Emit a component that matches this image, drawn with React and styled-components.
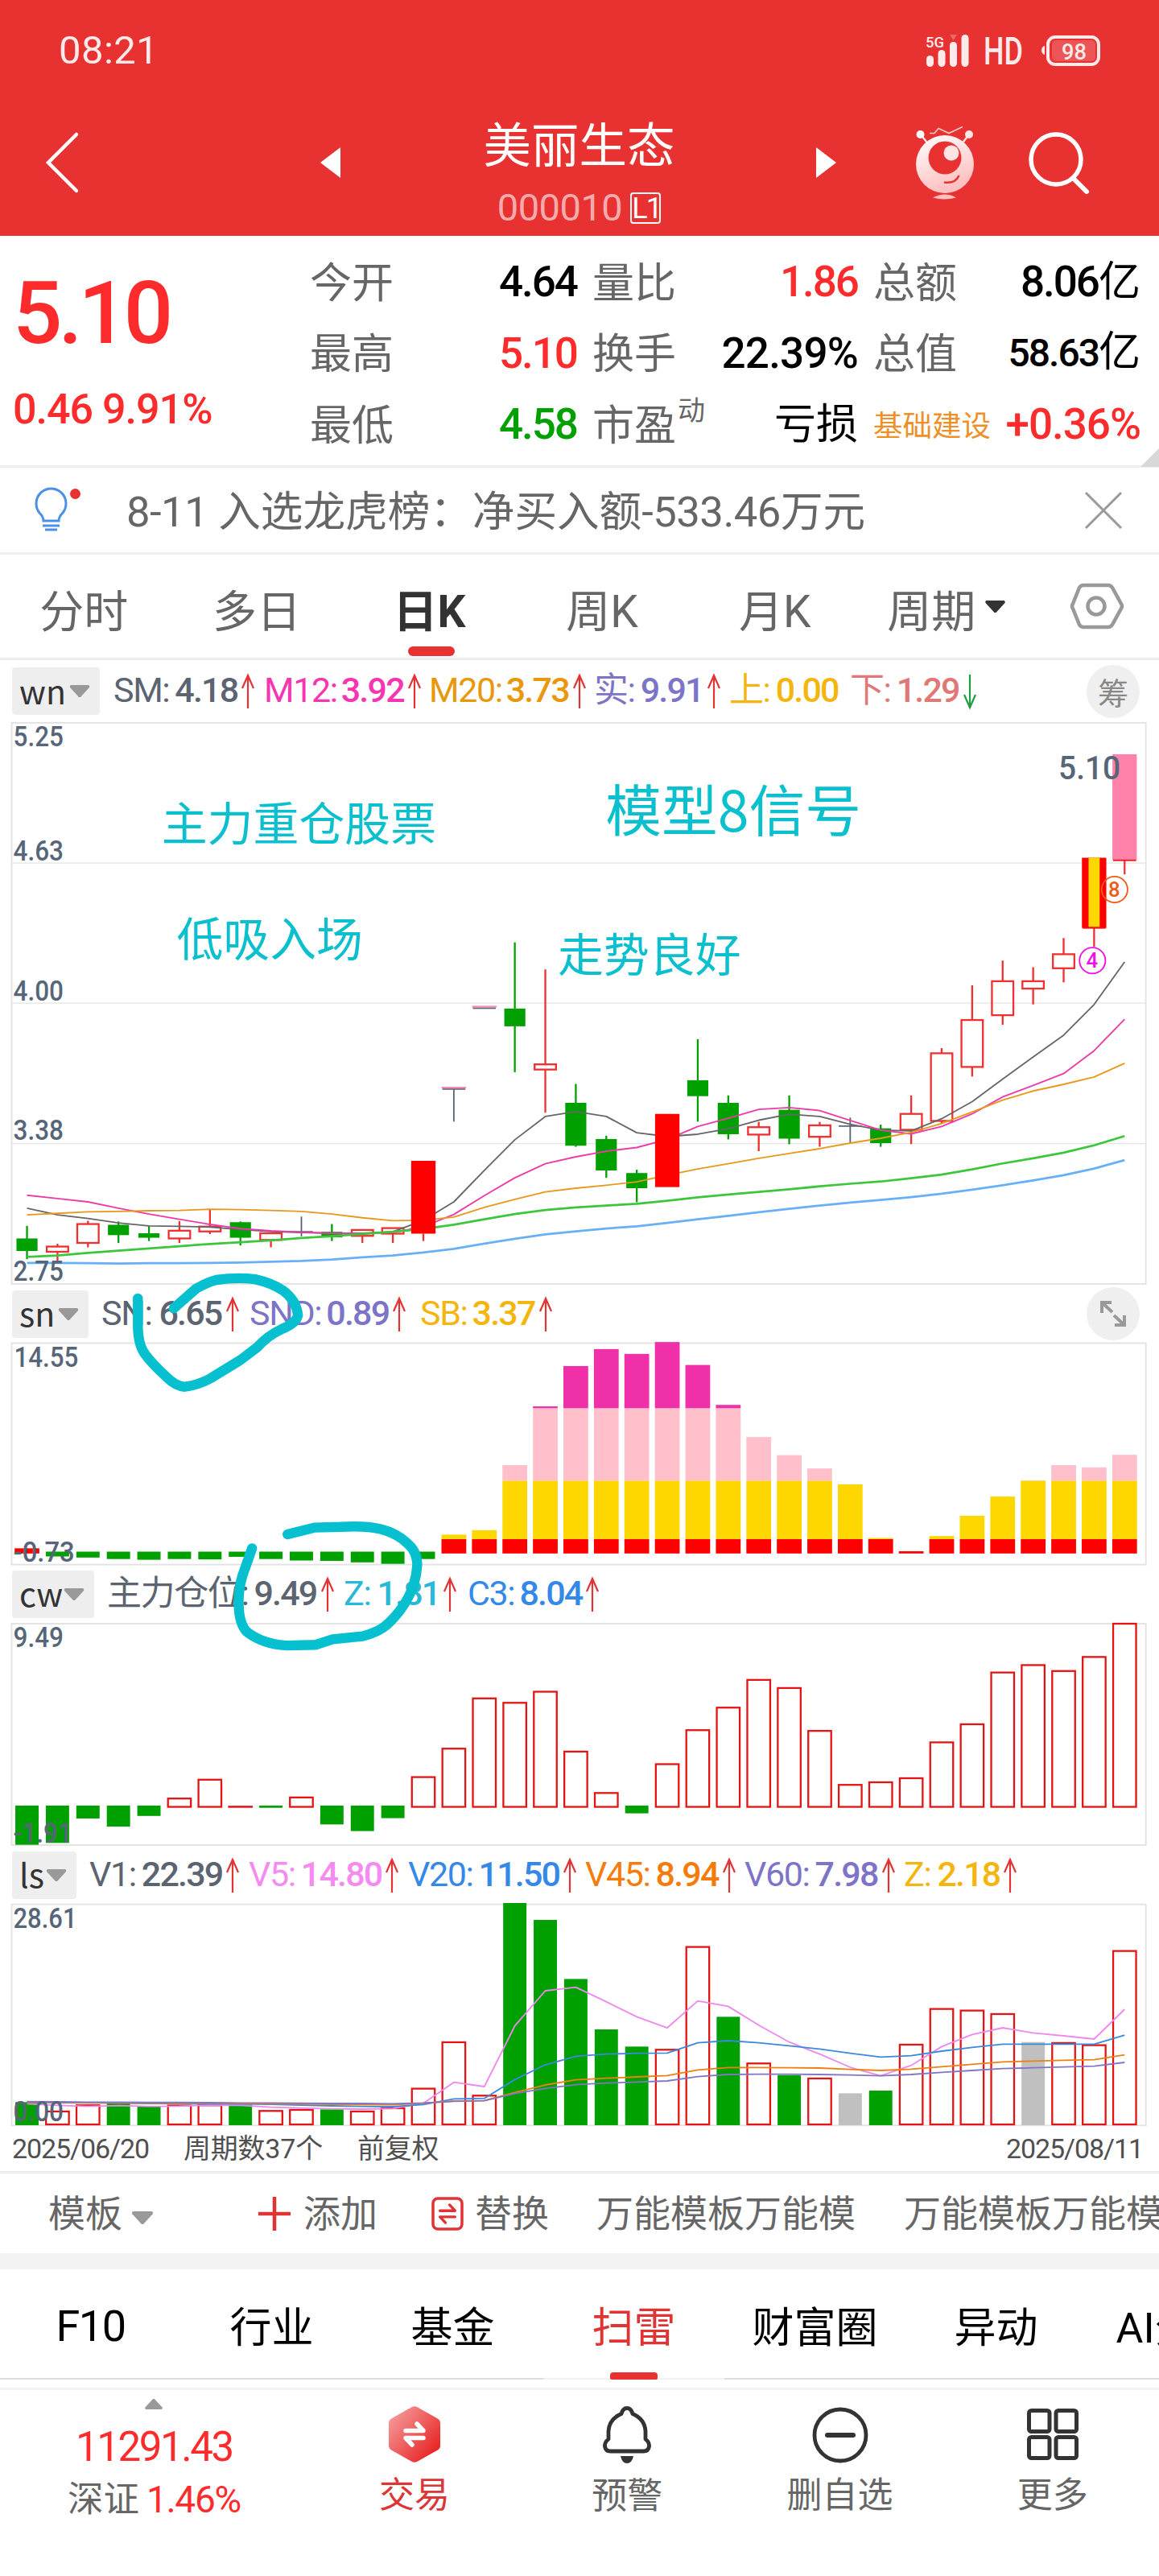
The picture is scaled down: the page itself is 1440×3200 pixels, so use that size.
import React from 'react';
import styled, { createGlobalStyle, css } from 'styled-components';

const RED = '#e83131';
const UP = '#fd2b2b';
const DOWN = '#00a000';
const SLATE = '#566678';
const INK = '#0abfce';

const GlobalStyle = createGlobalStyle`
  * { box-sizing: border-box; }
  body {
    margin: 0;
    background: #fff;
    font-family: Roboto, 'Noto Sans CJK SC', sans-serif;
    font-size: 52px;
    color: #666;
  }
  svg { display: block; flex: none; overflow: visible; }
`;

const Screen = styled.div`
  width: 1440px;
  height: 3200px;
  overflow: hidden;
  display: flex;
  flex-direction: column;
  background: #fff;
  white-space: nowrap;
`;

/* ---------- header ---------- */

const Header = styled.header`
  height: 293px;
  flex: none;
  background: ${RED};
  color: #fff;
`;

const StatusBar = styled.div`
  height: 125px;
  padding: 0 73px 0 73px;
  display: flex;
  align-items: center;
  justify-content: space-between;
`;

const Clock = styled.span`
  font-size: 49px;
  letter-spacing: 0.4px;
  line-height: 60px;
  opacity: 0.9;
`;

const TitleBar = styled.div`
  height: 167px;
  padding-left: 57px;
  display: flex;
`;

const Spot = styled.div`
  width: ${p => p.$w}px;
  padding-top: ${p => p.$top}px;
  flex: none;
`;

const StockTitle = styled.div`
  width: 589px;
  flex: none;
  display: flex;
  flex-direction: column;
  align-items: center;
`;

const StockName = styled.div`
  margin-top: 17px;
  font-size: 59.5px;
  line-height: 80px;
`;

const StockCode = styled.div`
  margin-top: 11px;
  display: flex;
  align-items: center;
  gap: 10px;
  font-size: 47px;
  line-height: 50px;
  letter-spacing: -0.5px;
  color: rgba(255, 255, 255, 0.62);
`;

const Level = styled.span`
  width: 38px;
  height: 39px;
  border: 2px solid #fff;
  border-radius: 4px;
  color: #fff;
  font-size: 36px;
  line-height: 36px;
  letter-spacing: -2px;
  text-align: center;
`;

/* ---------- quote ---------- */

const Quote = styled.section`
  position: relative;
  height: 288px;
  flex: none;
  display: flex;
  padding-top: 13px;
  border-bottom: 3px solid #eee;
  &::after {
    content: '';
    position: absolute;
    right: 0;
    bottom: -2px;
    border-left: 23px solid transparent;
    border-bottom: 23px solid #d8d8d8;
  }
`;

const Last = styled.div`
  width: 385px;
  padding: 43px 0 0 16px;
  color: ${UP};
`;

const Price = styled.div`
  font-size: 108px;
  font-weight: 500;
  line-height: 80px;
  letter-spacing: -5px;
`;

const Change = styled.div`
  margin-top: 50px;
  font-size: 52px;
  font-weight: 500;
  line-height: 60px;
  letter-spacing: -1px;
`;

const QuoteGrid = styled.div`
  display: grid;
  grid-template-columns: 332px 330px 332px;
  grid-auto-rows: 88.5px;
  column-gap: 19px;
`;

const Cell = styled.div`
  display: flex;
  justify-content: space-between;
  align-items: center;
  line-height: 60px;
`;

const CellLabel = styled.span`
  display: flex;
  padding-top: 5px;
  color: ${p => p.$color || '#666'};
  font-size: ${p => p.$size || 52}px;
  sup {
    font-size: 34px;
    line-height: 20px;
    margin-left: 2px;
  }
`;

const CellValue = styled.span`
  font-size: ${p => p.$size || 53}px;
  font-weight: 500;
  letter-spacing: ${p => p.$ls || -2}px;
  color: ${p => p.$color || '#000'};
  i {
    font-style: normal;
    font-weight: 400;
    font-size: 52px;
    letter-spacing: 0;
  }
`;

/* ---------- notice ---------- */

const Notice = styled.section`
  height: 108px;
  flex: none;
  display: flex;
  align-items: center;
  padding: 0 45px 0 42px;
  border-bottom: 3px solid #eee;
`;

const NoticeText = styled.div`
  flex: 1;
  margin-left: 57px;
  padding-top: 4px;
  font-size: 52.6px;
  line-height: 60px;
  b {
    font-weight: 400;
    letter-spacing: -0.5px;
  }
`;

/* ---------- period tabs ---------- */

const Periods = styled.nav`
  height: 131px;
  flex: none;
  display: flex;
  align-items: center;
  border-bottom: 3px solid #eee;
`;

const Period = styled.div`
  position: relative;
  width: 214.6px;
  height: 100%;
  display: flex;
  align-items: center;
  justify-content: center;
  gap: 9px;
  padding: 4px 6px 0 0;
  font-size: 55px;
  svg { margin-top: -4px; }
  ${p => p.$active && css`
    color: #333;
    font-weight: 700;
    &::after {
      content: '';
      position: absolute;
      left: 78px;
      bottom: 2px;
      width: 58px;
      height: 12px;
      border-radius: 6px;
      background: ${RED};
    }
  `}
`;

/* ---------- charts ---------- */

const Charts = styled.section`
  position: relative;
  flex: none;
`;

const MetricRow = styled.div`
  height: ${p => p.$h || 70}px;
  display: flex;
  align-items: center;
  padding: 0 24px 0 15px;
`;

const Badge = styled.div`
  width: ${p => p.$w}px;
  height: 59px;
  margin-right: ${p => p.$gap}px;
  padding: 0 12px 4px 9px;
  display: flex;
  align-items: center;
  justify-content: space-between;
  border-radius: 4px;
  background: #eee;
  color: #333;
  font-family: 'Noto Sans CJK SC', sans-serif;
  font-size: 41px;
  line-height: 50px;
  svg { margin-top: 4px; }
`;

const Metric = styled.div`
  width: ${p => p.$w}px;
  display: flex;
  align-items: center;
  padding-bottom: 3px;
  font-size: 43px;
  line-height: 50px;
  letter-spacing: -1.4px;
  color: ${p => p.$color};
  b {
    margin-left: ${p => p.$gap}px;
    font-weight: 500;
    letter-spacing: -1.8px;
  }
  svg { margin: 4px 0 0 5px; }
`;

const Round = styled.div`
  width: 66px;
  height: 66px;
  margin-left: auto;
  border-radius: 50%;
  background: #efefef;
  display: flex;
  align-items: center;
  justify-content: center;
  color: #888;
  font-size: 38px;
`;

const Scribble = styled.svg`
  position: absolute;
  left: 0;
  top: 770px;
  pointer-events: none;
`;

const Dates = styled.div`
  height: 55px;
  flex: none;
  display: flex;
  align-items: center;
  padding: 0 20px 2px 15px;
  font-size: 34px;
  line-height: 40px;
  letter-spacing: -0.2px;
  color: #505050;
  span { margin-right: 43px; }
  span:first-child { letter-spacing: -1.1px; }
  span:last-child { margin: 0 0 0 auto; letter-spacing: -1.1px; }
`;

/* ---------- template bar ---------- */

const Templates = styled.div`
  height: 122px;
  flex: none;
  display: flex;
  align-items: center;
  border-top: 3px solid #eee;
  border-bottom: 20px solid #f3f3f3;
  padding-left: 60px;
  font-size: 46px;
  line-height: 60px;
`;

const TemplateItem = styled.div`
  display: flex;
  align-items: center;
  gap: ${p => p.$gap || 0}px;
  margin-right: ${p => p.$mr}px;
  svg { margin-top: ${p => p.$drop || 0}px; }
`;

const Divider = styled.i`
  width: 2px;
  height: 52px;
  margin-right: 66px;
  background: #eee;
`;

/* ---------- info tabs ---------- */

const InfoTabs = styled.nav`
  height: 150px;
  flex: none;
  display: flex;
  border-bottom: 3px solid #f3f3f3;
`;

const InfoTab = styled.div`
  position: relative;
  flex: none;
  width: 225px;
  height: 137px;
  display: flex;
  align-items: center;
  justify-content: center;
  padding-top: 1px;
  font-size: 52px;
  color: ${p => (p.$active ? '#e03434' : '#000')};
  border-bottom: 2px solid ${p => (p.$active ? '#f2f2f2' : '#ddd')};
  ${p => p.$active && css`
    &::after {
      content: '';
      position: absolute;
      left: 83px;
      bottom: -2px;
      width: 59px;
      height: 9px;
      border-radius: 4px 4px 2px 2px;
      background: ${RED};
    }
  `}
  big {
    padding-top: 5px;
    font-size: 54px;
    letter-spacing: -1.5px;
  }
`;

/* ---------- bottom nav ---------- */

const BottomNav = styled.footer`
  flex: 1;
  display: flex;
`;

const NavItem = styled.div`
  width: 264.4px;
  display: flex;
  flex-direction: column;
  align-items: center;
  padding-top: 20px;
  font-size: 44px;
  line-height: 60px;
  color: ${p => (p.$hot ? '#dc3636' : '#666')};
  span { margin-top: 11px; }
`;

const IndexItem = styled.div`
  width: 383px;
  display: flex;
  flex-direction: column;
  align-items: center;
  padding-top: 10px;
  color: ${UP};
`;

const IndexValue = styled.div`
  margin-top: 16px;
  font-size: 51px;
  line-height: 60px;
  letter-spacing: -2.4px;
`;

const IndexChange = styled.div`
  margin-top: 5px;
  display: flex;
  gap: 9px;
  font-size: 46px;
  line-height: 60px;
  letter-spacing: -1.3px;
  em {
    font-style: normal;
    font-size: 44.5px;
    letter-spacing: 0;
    color: #666;
  }
`;

/* ---------- icons ---------- */

const Caret = ({ w = 26, h = 17, color = '#999', up }) => (
  <svg width={w} height={h} viewBox="0 0 26 17">
    <path
      d={up ? 'M2 16h22q2-1 1-3L14 1h-2L1 13q-1 2 1 3z' : 'M2 1h22q2 1 1 3L14 16h-2L1 4Q0 2 2 1z'}
      fill={color}
    />
  </svg>
);

const Arrow = ({ down }) => (
  <svg width="16" height="42" viewBox="0 0 16 42">
    <path
      d={down ? 'M8 0v41M1 25l7 16 7-16' : 'M8 42V1M1 17L8 1l7 16'}
      fill="none"
      stroke={down ? '#1f9d43' : '#e23434'}
      strokeWidth="2.2"
    />
  </svg>
);

const StatusIcons = () => (
  <svg width="216" height="40" viewBox="0 0 216 40" opacity="0.9" fill="#fff">
    <text x="-1" y="15.5" fontSize="19" fontWeight="500" textLength="23" lengthAdjust="spacingAndGlyphs">5G</text>
    <rect x="0" y="26" width="9" height="14" rx="4.5" />
    <rect x="14.5" y="19" width="9" height="21" rx="4.5" />
    <rect x="29" y="9" width="9" height="31" rx="4.5" />
    <rect x="43.5" y="0" width="9" height="40" rx="4.5" />
    <path d="M29 0h9l-4.500 7z" opacity="0.3" />
    <text x="71" y="37" fontSize="49" fontWeight="500" textLength="49" lengthAdjust="spacingAndGlyphs">HD</text>
    <path d="M147 14v11q-4-1-4-5.500t4-5.500z" />
    <rect x="151" y="3" width="63" height="34" rx="9" fill="none" stroke="#fff" strokeWidth="4" />
    <rect x="156" y="7" width="54" height="26" rx="5" opacity="0.2" />
    <text x="168" y="31" fontSize="28" fontWeight="500" textLength="31" lengthAdjust="spacingAndGlyphs">98</text>
  </svg>
);

const Robot = () => (
  <svg width="72" height="90" viewBox="0 0 72 90">
    <defs>
      <linearGradient id="robot" x1="0" y1="0" x2="0.4" y2="1">
        <stop offset="0" stopColor="#fff" />
        <stop offset="1" stopColor="#ffc0c0" />
      </linearGradient>
    </defs>
    <path d="M17 8.500h6l5-6 13 6 17-8" fill="none" stroke="#ffc9c9" strokeWidth="1.600" />
    <path d="M6 10l10 13M66 10L56 23" stroke="#ffe6e6" strokeWidth="2.400" />
    <circle cx="5.500" cy="10" r="5" fill="#fff" />
    <circle cx="66" cy="10" r="5" fill="#ffe6e6" />
    <circle cx="36" cy="47" r="36" fill="url(#robot)" />
    <circle cx="36" cy="39" r="20.500" fill={RED} />
    <circle cx="44" cy="33" r="9.500" fill="#ffe3e3" />
    <path d="M35 69.500q14 2 18.500-8.500" fill="none" stroke={RED} strokeWidth="2.400" />
    <path d="M21 88.500q15-8 29 0-15 4-29 0z" fill="#ffc0c0" />
  </svg>
);

const Bulb = () => (
  <svg width="58" height="54" viewBox="0 0 58 54">
    <path
      d="M12 40q0-5-5-10A18.500 18.500 0 1 1 36 30q-5 5-5 10zM11 46h21M14 51h15M12 40h19"
      fill="none"
      stroke="#4a90e8"
      strokeWidth="3"
    />
    <circle cx="51.500" cy="6.500" r="6.500" fill={RED} />
  </svg>
);

const Swap = ({ color, w }) => (
  <path d="M-11-4.500H11L3-13M11 4.500H-11L-3 13" fill="none" stroke={color} strokeWidth={w} strokeLinejoin="round" strokeLinecap="round" />
);

/* ---------- chart drawing ---------- */

// every chart shares a 3136 unit wide canvas, 37 bars on an 82.5 unit pitch
const cx = i => 73 + i * 82.5;

const Series = ({ data, color, width = 4, y = v => v }) => (
  <polyline
    points={data.map((v, i) => `${cx(i)},${y(v)}`).join(' ')}
    fill="none"
    stroke={color}
    strokeWidth={width}
    strokeLinejoin="round"
  />
);

const AxisText = ({ x = 36, y, w, size = 75, children }) => (
  <text x={x} y={y} fontSize={size} fontWeight="500" fill={SLATE} textLength={w} lengthAdjust="spacingAndGlyphs">
    {children}
  </text>
);

const Frame = ({ y, h }) => (
  <rect x="31.500" y={y} width="3069" height={h} fill="none" stroke="#e2e2e2" strokeWidth="4" />
);

// kind, high, body top, body bottom, low
const candles = [
  ['g', 1400, 1434, 1468, 1490], ['r', 1448, 1456, 1470, 1494], ['r', 1386, 1395, 1446, 1458],
  ['g', 1388, 1397, 1425, 1446], ['g', 1400, 1420, 1432, 1441], ['r', 1387, 1413, 1434, 1446],
  ['r', 1357, 1402, 1415, 1422], ['g', 1388, 1390, 1432, 1453], ['r', 1418, 1420, 1438, 1458],
  ['x', 1375, 1414, 1414, 1428], ['g', 1395, 1416, 1431, 1441], ['r', 1409, 1411, 1427, 1446],
  ['r', 1405, 1406, 1421, 1446], ['s', 1224, 1224, 1421, 1441], ['t', 1028, 1028, 1028, 1118],
  ['t', 809, 809, 809, 809], ['g', 633, 812, 860, 984], ['r', 706, 963, 977, 1094],
  ['g', 1016, 1067, 1183, 1186], ['g', 1156, 1165, 1250, 1270], ['g', 1248, 1257, 1298, 1336],
  ['s', 1097, 1097, 1295, 1295], ['g', 895, 1006, 1049, 1118], ['g', 1047, 1067, 1152, 1166],
  ['r', 1119, 1133, 1153, 1198], ['g', 1047, 1086, 1164, 1179], ['r', 1119, 1128, 1159, 1186],
  ['x', 1107, 1128, 1128, 1174], ['g', 1126, 1136, 1176, 1186], ['r', 1047, 1097, 1140, 1179],
  ['r', 919, 933, 1116, 1122], ['r', 749, 843, 970, 996], ['r', 682, 738, 830, 856],
  ['r', 700, 738, 758, 801], ['r', 621, 665, 703, 741], ['y', 404, 404, 594, 645],
  ['p', 124, 124, 411, 449],
];

const Candle = ({ i, kind, high, top, bottom, low }) => {
  const x = cx(i);
  if (kind === 'g') {
    return (
      <g fill={DOWN}>
        <rect x={x - 2.5} y={high} width="5" height={low - high} />
        <rect x={x - 28.5} y={top} width="57" height={bottom - top} />
      </g>
    );
  }
  if (kind === 'r') {
    return (
      <g fill="none" stroke="#f03030" strokeWidth="5">
        <path d={`M${x} ${high}V${top}M${x} ${bottom}V${low}`} />
        <rect x={x - 29} y={top} width="58" height={bottom - top} />
      </g>
    );
  }
  if (kind === 'x' || kind === 't') {
    return (
      <g>
        <path d={`M${x} ${high}V${low}M${x - 31} ${top + 2}h62`} stroke={SLATE} strokeWidth="4" />
        {kind === 't' && <path d={`M${x - 33} ${top - 2}h66`} stroke="#f58ab5" strokeWidth="5" />}
      </g>
    );
  }
  return (
    <g>
      <path d={`M${x} ${bottom}V${low}`} stroke="#f03030" strokeWidth="5" />
      <rect x={x - 33} y={top} width="66" height={bottom - top} fill={kind === 'p' ? '#ff82ab' : '#f00'} />
      {kind === 'y' && <rect x={x - 15} y={top} width="30" height={bottom - top - 3} fill="#ffd700" />}
      {kind !== 's' && <path d={`M${x - 31} ${bottom}h62`} stroke="#f01515" strokeWidth="4" />}
    </g>
  );
};

const ma5 = [1352, 1370, 1380, 1392, 1400, 1401, 1403, 1410, 1415, 1418, 1420, 1420, 1416, 1385, 1335, 1250, 1167, 1104, 1091, 1104, 1148, 1158, 1152, 1137, 1114, 1098, 1104, 1125, 1141, 1143, 1110, 1064, 1003, 943, 884, 801, 686];
const ma12 = [1317, 1326, 1335, 1352, 1368, 1382, 1396, 1407, 1413, 1417, 1420, 1421, 1418, 1402, 1369, 1318, 1270, 1232, 1213, 1198, 1188, 1166, 1131, 1109, 1085, 1080, 1088, 1115, 1141, 1151, 1131, 1097, 1051, 1020, 988, 926, 841];
const ma20 = [1370, 1366, 1362, 1361, 1359, 1358, 1355, 1356, 1358, 1361, 1368, 1378, 1386, 1385, 1376, 1350, 1328, 1308, 1298, 1290, 1281, 1263, 1246, 1232, 1217, 1204, 1191, 1176, 1163, 1147, 1123, 1092, 1060, 1035, 1017, 997, 960];
const ma45 = [1484, 1480, 1473, 1467, 1461, 1455, 1449, 1444, 1439, 1433, 1428, 1422, 1416, 1408, 1397, 1382, 1368, 1357, 1350, 1345, 1340, 1332, 1323, 1315, 1308, 1301, 1293, 1286, 1280, 1271, 1261, 1247, 1231, 1217, 1202, 1182, 1157];
const ma60 = [1500, 1500, 1501, 1502, 1501, 1501, 1500, 1499, 1497, 1495, 1491, 1485, 1480, 1472, 1462, 1448, 1435, 1423, 1415, 1407, 1401, 1392, 1382, 1373, 1363, 1354, 1345, 1337, 1330, 1322, 1313, 1302, 1290, 1277, 1263, 1245, 1222];

const notes = [
  { text: '主力重仓股票', x: 437, y: 358, size: 124 },
  { text: '低吸入场', x: 478, y: 670, size: 126 },
  { text: '模型8信号', x: 1638, y: 333, size: 152 },
  { text: '走势良好', x: 1509, y: 713, size: 124 },
];

const Mark = ({ x, y, color, children }) => (
  <g>
    <circle cx={x} cy={y} r="35" fill="none" stroke={color} strokeWidth="4" />
    <text x={x - 1} y={y + 20} fontSize="56" fontWeight="500" fill={color} textAnchor="middle">{children}</text>
  </g>
);

const renderCandle = ([kind, high, top, bottom, low], i) => (
  <Candle key={i} i={i} kind={kind} high={high} top={top} bottom={bottom} low={low} />
);

const PriceChart = () => (
  <svg width="1440" height="700" viewBox="0 37 3136 1524.500">
    <path d="M32 418.500H3100M32 797.500H3100M32 1177.500H3100" stroke="#e4e4e4" strokeWidth="2.500" />
    <Frame y={39} h={1518} />
    {candles.map((c, i) => (c[0] === 's' ? null : renderCandle(c, i)))}
    <Series data={ma5} color="#666" />
    <Series data={ma12} color="#ee3aa8" />
    <Series data={ma20} color="#e8981c" />
    <Series data={ma45} color="#3cc63c" width={6} />
    <Series data={ma60} color="#68b0f5" width={6} />
    {candles.map((c, i) => (c[0] === 's' ? renderCandle(c, i) : null))}
    <AxisText y={102} w={136}>5.25</AxisText>
    <AxisText y={411} w={136}>4.63</AxisText>
    <AxisText y={790} w={136}>4.00</AxisText>
    <AxisText y={1168} w={136}>3.38</AxisText>
    <AxisText y={1549} w={136}>2.75</AxisText>
    <AxisText x={2864} y={192} w={168} size={90}>5.10</AxisText>
    <Mark x={3016} y={490} color="#f05a14">8</Mark>
    <Mark x={2956} y={682} color="#f010e8">4</Mark>
    {notes.map(n => (
      <text key={n.text} x={n.x} y={n.y} fontSize={n.size} fontFamily="'Noto Sans CJK SC', sans-serif" fill={INK}>
        {n.text}
      </text>
    ))}
  </svg>
);

// end of each bar; values below the zero line (740) are green
const snBars = [726, 748, 751, 755, 757, 755, 756, 749, 755, 759, 760, 764, 768, 755, 689, 677, 501, 342, 233, 187, 200, 168, 230, 338, 425, 474, 510, 553, 698, 734, 693, 638, 586, 542, 501, 507, 473];
const bands = [
  [740, '#f00'],
  [701, '#ffd700'],
  [543, '#ffc0cb'],
  [347, '#f030a8'],
];

const StackChart = () => (
  <svg width="1440" height="278" viewBox="0 167.700 3136 605.400">
    <Frame y={171} h={599} />
    {snBars.map((v, i) => {
      const x = cx(i);
      if (v > 740) return <rect key={i} x={x - 31.5} y="735" width="63" height={v - 735} fill={DOWN} />;
      return bands.filter(([from]) => v < from).map(([from, fill], b, used) => {
        const to = b === used.length - 1 ? v : used[b + 1][0];
        return <rect key={`${i}-${b}`} x={x - 33.5} y={to} width="67" height={from - to} fill={fill} />;
      });
    })}
    <AxisText x={38} y={235} w={174}>14.55</AxisText>
    <AxisText y={762} w={166}>-0.73</AxisText>
  </svg>
);

const cwBars = [
  -1528, -1523, -1457, -1479, -1450, 1402, 1351, 1424, -1428, 1399, -1473, -1491, -1456, 1344, 1267, 1131, 1143, 1113,
  1275, 1387, -1443, 1309, 1217, 1156, 1081, 1103, 1219, 1365, 1358, 1347, 1250, 1201, 1061, 1041, 1057, 1019, 929,
];

const HoldChart = () => (
  <svg width="1440" height="279" viewBox="0 925.600 3136 607.600">
    <Frame y={930} h={599} />
    {cwBars.map((v, i) => (v < 0 ? (
      <rect key={i} x={cx(i) - 31.5} y="1422" width="63" height={-v - 1422} fill={DOWN} />
    ) : (
      <rect key={i} x={cx(i) - 31} y={v + 1} width="62" height={1424.5 - v} fill="#fff" stroke="#e31414" strokeWidth="5" />
    )))}
    <AxisText y={993} w={136}>9.49</AxisText>
    <AxisText y={1522} w={160}>-1.91</AxisText>
  </svg>
);

const volume = [
  ['g', 964], ['r', 996], ['r', 973], ['g', 968], ['g', 981], ['r', 974], ['r', 973], ['g', 973], ['r', 994],
  ['r', 990], ['g', 991], ['r', 996], ['r', 984], ['r', 911], ['r', 738], ['r', 937], ['g', 222], ['g', 285],
  ['g', 505], ['g', 693], ['g', 757], ['r', 766], ['r', 383], ['g', 646], ['r', 817], ['g', 863], ['r', 873],
  ['n', 931], ['g', 921], ['r', 747], ['r', 614], ['r', 620], ['r', 633], ['n', 740], ['r', 741], ['r', 749], ['r', 398],
];
const v5 = [970, 976, 980, 977, 980, 979, 975, 976, 983, 986, 989, 990, 988, 968, 890, 906, 680, 549, 536, 590, 646, 687, 587, 607, 677, 740, 785, 834, 866, 827, 757, 712, 687, 706, 717, 729, 618];
const v20 = [965, 966, 967, 968, 969, 970, 971, 971, 972, 975, 978, 980, 981, 973, 952, 950, 880, 825, 793, 785, 782, 781, 743, 735, 743, 754, 766, 782, 796, 791, 774, 760, 748, 748, 748, 748, 714];
const v45 = [964, 965, 966, 966, 967, 968, 968, 969, 970, 971, 972, 973, 974, 968, 960, 958, 928, 900, 881, 875, 870, 865, 844, 835, 835, 836, 837, 842, 846, 841, 832, 823, 814, 811, 808, 806, 788];
const v60 = [962, 963, 964, 964, 965, 965, 966, 967, 967, 968, 969, 969, 970, 967, 961, 959, 932, 913, 899, 893, 889, 885, 869, 861, 860, 860, 861, 863, 866, 861, 853, 846, 839, 836, 833, 830, 816];
const vy = v => (v - 222) * 0.726;

const VolumeChart = () => (
  <svg width="1440" height="278" viewBox="0 0 3136 605.400">
    <Frame y={3.7} h={598} />
    {volume.map(([kind, v], i) => (kind === 'r' ? (
      <rect key={i} x={cx(i) - 31} y={vy(v) + 2} width="62" height={597 - vy(v)} fill="#fff" stroke="#e31414" strokeWidth="5" />
    ) : (
      <rect key={i} x={cx(i) - 31.5} y={vy(v)} width="63" height={601 - vy(v)} fill={kind === 'g' ? DOWN : '#c0c0c0'} />
    )))}
    <Series data={v5} color="#ee88ee" y={vy} />
    <Series data={v20} color="#3c88dc" y={vy} />
    <Series data={v45} color="#ee8010" y={vy} />
    <Series data={v60} color="#8076c4" y={vy} />
    <AxisText y={67} w={172}>28.61</AxisText>
    <AxisText y={591} w={136}>0.00</AxisText>
  </svg>
);

/* ---------- data ---------- */

const quoteCells = [
  { label: '今开', value: '4.64' },
  { label: '量比', value: '1.86', color: UP },
  { label: '总额', value: '8.06', unit: '亿' },
  { label: '最高', value: '5.10', color: UP },
  { label: '换手', value: '22.39%', ls: -0.8 },
  { label: '总值', value: '58.63', unit: '亿', size: 48 },
  { label: '最低', value: '4.58', color: DOWN },
  { label: '市盈', sup: '动', value: '', unit: '亏损' },
  { label: '基础建设', labelColor: '#ee9028', labelSize: 36.5, value: '+0.36%', color: UP, ls: -1 },
];

// w is the distance to the next entry, gap the room after the colon
const wnMetrics = [
  { name: 'SM', value: '4.18', color: '#5b6470', w: 187, gap: 7 },
  { name: 'M12', value: '3.92', color: '#f536b0', w: 205, gap: 5 },
  { name: 'M20', value: '3.73', color: '#e8980c', w: 205, gap: 5 },
  { name: '实', value: '9.91', color: '#7d74c8', w: 168, gap: 7 },
  { name: '上', value: '0.00', color: '#f5b50f', w: 150, gap: 7, dir: 'none' },
  { name: '下', value: '1.29', color: '#e07878', w: 160, gap: 7, dir: 'down' },
];
const snMetrics = [
  { name: 'SN', value: '6.65', color: '#5b6470', w: 184, gap: 9 },
  { name: 'SND', value: '0.89', color: '#7d74c8', w: 212, gap: 6 },
  { name: 'SB', value: '3.37', color: '#f5b50f', w: 180, gap: 6 },
];
const cwMetrics = [
  { name: '主力仓位', value: '9.49', color: '#5b6470', w: 294, gap: 7 },
  { name: 'Z', value: '1.81', color: '#2ab8d8', w: 154, gap: 8 },
  { name: 'C3', value: '8.04', color: '#3488e8', w: 180, gap: 6 },
];
const lsMetrics = [
  { name: 'V1', value: '22.39', color: '#5b6470', w: 198, gap: 7 },
  { name: 'V5', value: '14.80', color: '#f58af0', w: 198, gap: 7 },
  { name: 'V20', value: '11.50', color: '#3488e8', w: 220, gap: 7 },
  { name: 'V45', value: '8.94', color: '#f57c0c', w: 198, gap: 7 },
  { name: 'V60', value: '7.98', color: '#7d74c8', w: 198, gap: 7 },
  { name: 'Z', value: '2.18', color: '#f5b50f', w: 150, gap: 8 },
];

const Metrics = ({ items }) => items.map(m => (
  <Metric key={m.name} $w={m.w} $gap={m.gap} $color={m.color}>
    {m.name}:<b>{m.value}</b>
    {m.dir !== 'none' && <Arrow down={m.dir === 'down'} />}
  </Metric>
));

const periods = ['分时', '多日', '日K', '周K', '月K'];
const infoTabs = ['行业', '基金', '扫雷', '财富圈', '异动'];

export default function App() {
  return (
    <Screen>
      <GlobalStyle />
      <Header>
        <StatusBar>
          <Clock>08:21</Clock>
          <StatusIcons />
        </StatusBar>
        <TitleBar>
          <Spot $w={341} $top={40}>
            <svg width="40" height="74" viewBox="0 0 40 74">
              <path d="M38 2L3 37l35 35" fill="none" stroke="#fff" strokeWidth="4.500" strokeLinecap="round" />
            </svg>
          </Spot>
          <Spot $w={27} $top={58}>
            <svg width="26" height="38" viewBox="0 0 26 38"><path d="M25 0v38L0 19z" fill="#fff" /></svg>
          </Spot>
          <StockTitle>
            <StockName>美丽生态</StockName>
            <StockCode>000010<Level>L1</Level></StockCode>
          </StockTitle>
          <Spot $w={124} $top={58}>
            <svg width="26" height="38" viewBox="0 0 26 38"><path d="M0 0v38l25-19z" fill="#fff" /></svg>
          </Spot>
          <Spot $w={140} $top={32}><Robot /></Spot>
          <Spot $w={90} $top={39}>
            <svg width="78" height="78" viewBox="0 0 78 78" fill="none" stroke="#fff">
              <circle cx="34" cy="34" r="31" strokeWidth="5.500" />
              <path d="M56 58l16 16" strokeWidth="6" strokeLinecap="round" />
            </svg>
          </Spot>
        </TitleBar>
      </Header>

      <Quote>
        <Last>
          <Price>5.10</Price>
          <Change>0.46 9.91%</Change>
        </Last>
        <QuoteGrid>
          {quoteCells.map(c => (
            <Cell key={c.label}>
              <CellLabel $color={c.labelColor} $size={c.labelSize}>
                {c.label}
                {c.sup && <sup>{c.sup}</sup>}
              </CellLabel>
              <CellValue $color={c.color} $size={c.size} $ls={c.ls}>
                {c.value}
                {c.unit && <i>{c.unit}</i>}
              </CellValue>
            </Cell>
          ))}
        </QuoteGrid>
      </Quote>

      <Notice>
        <Bulb />
        <NoticeText><b>8-11</b> 入选龙虎榜：净买入额<b>-533.46</b>万元</NoticeText>
        <svg width="48" height="48" viewBox="0 0 48 48">
          <path d="M2 2l44 44M46 2L2 46" stroke="#999" strokeWidth="3" />
        </svg>
      </Notice>

      <Periods>
        {periods.map(p => <Period key={p} $active={p === '日K'}>{p}</Period>)}
        <Period>周期<Caret w={31} h={17} color="#333" /></Period>
        <svg width="120" height="64" viewBox="-38 -3 120 64" fill="none" stroke="#999" strokeWidth="4.500">
          <path d="M20 3h31q3 0 5 3l11 20q2 3 0 6L56 52q-2 3-5 3H20q-3 0-5-3L7 32q-2-3 0-6L15 6q2-3 5-3z" />
          <circle cx="36" cy="29" r="10.500" />
        </svg>
      </Periods>

      <Charts>
        <MetricRow $h={77}>
          <Badge $w={109} $gap={17}>wn<Caret /></Badge>
          <Metrics items={wnMetrics} />
          <Round>筹</Round>
        </MetricRow>
        <PriceChart />
        <MetricRow>
          <Badge $w={95} $gap={16}>sn<Caret /></Badge>
          <Metrics items={snMetrics} />
          <Round>
            <svg width="34" height="34" viewBox="0 0 34 34" fill="none" stroke="#999" strokeWidth="4">
              <path d="M15 3H3v13M3 3l13 12M19 31h12V19M31 31L18 19" />
            </svg>
          </Round>
        </MetricRow>
        <StackChart />
        <MetricRow>
          <Badge $w={102} $gap={16}>cw<Caret /></Badge>
          <Metrics items={cwMetrics} />
        </MetricRow>
        <HoldChart />
        <MetricRow>
          <Badge $w={80} $gap={16}>ls<Caret /></Badge>
          <Metrics items={lsMetrics} />
        </MetricRow>
        <VolumeChart />
        <Scribble width="1440" height="720" viewBox="0 0 3136 1568" fill="none" stroke="#06c0d0" strokeWidth="27" strokeLinecap="round" strokeLinejoin="round">
          <path d="M373 50V120Q373 175 392 200Q410 225 450 262Q475 287 500 289Q535 285 570 266L650 217L695 183Q725 150 760 134Q803 117 806 95Q802 55 765 28Q735 8 690-2Q640-8 585 0Q560 6 530 24L470 77" />
          <path d="M682 726L656 800Q644 840 646 880Q647 930 668 952Q710 985 775 989L855 987L900 972L980 964Q1030 952 1055 925Q1125 855 1129 770Q1128 735 1105 715Q1075 685 1030 674Q990 664 920 668L850 670L778 688" />
        </Scribble>
      </Charts>

      <Dates>
        <span>2025/06/20</span>
        <span>周期数37个</span>
        <span>前复权</span>
        <span>2025/08/11</span>
      </Dates>

      <Templates>
        <TemplateItem $gap={11} $mr={64} $drop={10}>模板<Caret w={28} h={18} /></TemplateItem>
        <Divider />
        <TemplateItem $gap={16} $mr={67}>
          <svg width="40" height="42" viewBox="0 0 40 42"><path d="M20 0v42M0 21h40" stroke="#e03434" strokeWidth="4.500" /></svg>
          添加
        </TemplateItem>
        <TemplateItem $gap={14} $mr={59}>
          <svg width="40" height="42" viewBox="0 0 40 42">
            <rect x="2" y="2" width="36" height="38" rx="6" fill="none" stroke="#e03434" strokeWidth="3.500" />
            <g transform="translate(20 21) scale(0.85)"><Swap color="#e03434" w={4} /></g>
          </svg>
          替换
        </TemplateItem>
        <TemplateItem $mr={60}>万能模板万能模</TemplateItem>
        <TemplateItem $mr={0}>万能模板万能模</TemplateItem>
      </Templates>

      <InfoTabs>
        <InfoTab><big>F10</big></InfoTab>
        {infoTabs.map(t => <InfoTab key={t} $active={t === '扫雷'}>{t}</InfoTab>)}
        <InfoTab>AI分析</InfoTab>
      </InfoTabs>

      <BottomNav>
        <IndexItem>
          <Caret w={24} h={15} up />
          <IndexValue>11291.43</IndexValue>
          <IndexChange><em>深证</em>1.46%</IndexChange>
        </IndexItem>
        <NavItem $hot>
          <svg width="64" height="70" viewBox="0 0 64 70">
            <defs>
              <linearGradient id="trade" x1="0" y1="0.100" x2="0.900" y2="0.900">
                <stop offset="0" stopColor="#f6a0a0" />
                <stop offset="1" stopColor="#e82020" />
              </linearGradient>
            </defs>
            <path d="M28 1.500q4-2.500 8 0l24 13.500q4 2 4 6v28q0 4-4 6L36 68.500q-4 2.500-8 0L4 55q-4-2-4-6V21q0-4 4-6z" fill="url(#trade)" />
            <g transform="translate(32 35)"><Swap color="#fff" w={5.5} /></g>
          </svg>
          <span>交易</span>
        </NavItem>
        <NavItem>
          <svg width="60" height="71" viewBox="0 0 60 71" fill="none" stroke="#333" strokeWidth="4.800" strokeLinejoin="round">
            <path d="M30 2.500q-5 0-7 7Q8 16 7 31v10q-5 4-4.500 9 1 6 7 6h41q6 0 7-6 .5-5-4.500-9V31Q52 16 37 9.500q-2-7-7-7z" />
            <path d="M22 62h16q-2 9-8 9t-8-9z" fill="#333" stroke="none" />
          </svg>
          <span>预警</span>
        </NavItem>
        <NavItem>
          <svg width="70" height="70" viewBox="0 0 70 70" fill="none" stroke="#333" strokeWidth="4.800">
            <circle cx="35" cy="36" r="32" />
            <path d="M19 36h32" strokeWidth="6" strokeLinecap="round" />
          </svg>
          <span>删自选</span>
        </NavItem>
        <NavItem>
          <svg width="64" height="70" viewBox="0 0 64 70" fill="none" stroke="#333" strokeWidth="5">
            <rect x="2.500" y="5.500" width="25.500" height="26" rx="3" />
            <rect x="36" y="5.500" width="25.500" height="26" rx="3" />
            <rect x="2.500" y="38.500" width="25.500" height="26" rx="3" />
            <rect x="36" y="38.500" width="25.500" height="26" rx="3" />
          </svg>
          <span>更多</span>
        </NavItem>
      </BottomNav>
    </Screen>
  );
}
